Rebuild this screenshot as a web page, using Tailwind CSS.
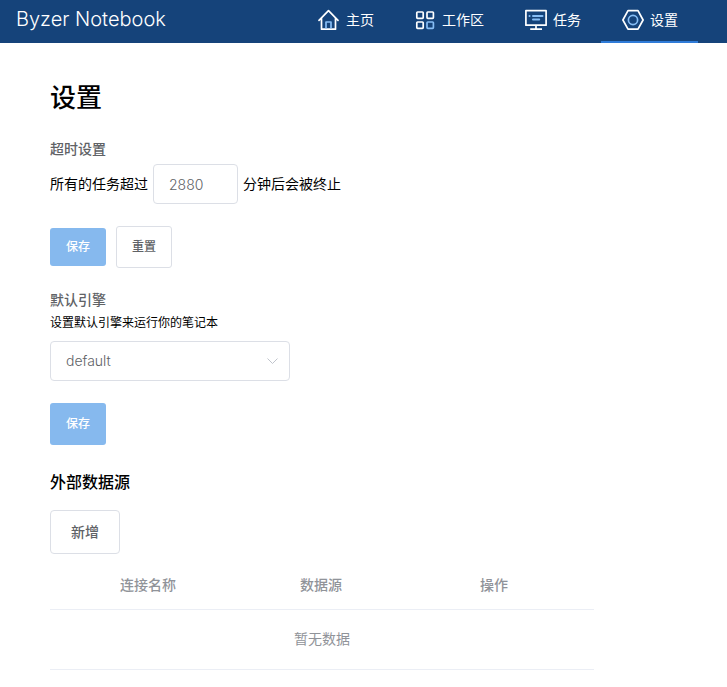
<!DOCTYPE html>
<html lang="zh-CN">
<head>
<meta charset="utf-8">
<meta name="viewport" content="width=device-width, initial-scale=1">
<title>设置 - Byzer Notebook</title>
<script src="https://cdn.jsdelivr.net/npm/@tailwindcss/browser@4"></script>
</head>
<body class="bg-white text-black text-sm font-['Inter','Noto_Sans_CJK_SC',sans-serif]">
<header class="flex items-stretch justify-between h-[43px] bg-[#15437a] pl-4 pr-[29px] text-white">
  <a href="#" class="text-xl leading-[38px] font-light">Byzer Notebook</a>
  <nav class="flex">
    <a href="#" class="flex items-center gap-1.5 pl-[21px] pr-5 pb-[3px]">
      <svg class="size-[22px]" viewBox="0 0 22 22" fill="none" stroke="#fff" stroke-width="1.7" stroke-linecap="round" stroke-linejoin="round"><path d="M1 11.3 10.5 1.6l9.5 9.7M3.5 9.2v11H17.5v-11"/><path stroke="#86bdf5" stroke-linecap="butt" d="M8 19.4v-6.4h5v6.4"/></svg>
      主页</a>
    <a href="#" class="flex items-center gap-1.5 pl-[21px] pr-5 pb-[3px]">
      <svg class="size-[21px]" viewBox="0 0 21 21" fill="none" stroke="#fff" stroke-width="1.7"><rect x="1.8" y="2" width="6.4" height="6.4" rx=".8"/><rect x="12" y="2" width="6.4" height="6.4" rx=".8"/><rect x="1.8" y="12" width="6.4" height="6.4" rx=".8"/><rect x="12" y="12" width="6.4" height="6.4" rx=".8" stroke="#86bdf5"/></svg>
      工作区</a>
    <a href="#" class="flex items-center gap-1.5 pl-[21px] pr-5 pb-[3px]">
      <svg class="size-[22px]" viewBox="0 0 22 22" fill="none" stroke="#fff" stroke-width="1.7" stroke-linejoin="round"><path d="M.9 1.6h20.2v14.6H.9zM11 16.2v4M5.2 20.2h11.8"/><path stroke="#86bdf5" stroke-width="2" stroke-linecap="round" d="M4.5 7h.1M8 7h9.5M8 10.4h6.2"/></svg>
      任务</a>
    <a href="#" aria-current="page" class="flex items-center gap-1.5 pl-[21px] pr-5 pb-px border-b-2 border-[#2f7bd8]">
      <svg class="size-[22px]" viewBox="0 0 22 22" fill="none" stroke="#fff" stroke-width="1.7" stroke-linejoin="round"><path d="M6 1.6h10L21.1 11 16 20.2H6L.9 11z"/><circle cx="11" cy="11" r="4.6" stroke="#86bdf5"/></svg>
      设置</a>
  </nav>
</header>
<main class="px-[50px] pt-9">
  <h1 class="text-[26px] leading-[38px] font-medium">设置</h1>
  <form>
    <h2 class="mt-[22px] leading-5 font-medium text-[#606266]">超时设置</h2>
    <div class="mt-[5px] flex items-center gap-[5px]">
      <label for="timeout">所有的任务超过</label>
      <input id="timeout" value="2880" class="w-[85px] h-10 rounded border border-[#dcdfe6] px-[15px] font-light text-[#606266]">
      <span>分钟后会被终止</span>
    </div>
    <div class="mt-[22px] flex items-center gap-2.5 text-xs font-medium">
      <button type="button" class="w-14 h-[38px] rounded-[3px] bg-[#86b9ee] text-white">保存</button>
      <button type="button" class="w-14 h-[42px] rounded-[3px] border border-[#dcdfe6] text-[#606266]">重置</button>
    </div>
  </form>
  <form>
    <h2 class="mt-[22px] leading-5 font-medium text-[#606266]">默认引擎</h2>
    <label for="engine" class="block mt-1 text-xs leading-[18px]">设置默认引擎来运行你的笔记本</label>
    <div class="relative mt-[9px] w-60">
      <select id="engine" class="block w-full h-10 appearance-none rounded border border-[#dcdfe6] px-[15px] font-light text-[#606266]"><option>default</option></select>
      <svg class="pointer-events-none absolute right-3 top-[15px] w-3 h-2.5" viewBox="0 0 12 10" fill="none" stroke="#c0c4cc"><path d="m1.5 2.5 5 5 5-5"/></svg>
    </div>
    <button type="button" class="mt-[22px] block w-14 h-[42px] rounded-[3px] bg-[#86b9ee] text-xs font-medium text-white">保存</button>
  </form>
  <section>
    <h2 class="mt-[25px] text-base leading-6 font-medium">外部数据源</h2>
    <button type="button" class="mt-4 block w-[70px] h-11 rounded border border-[#dcdfe6] font-medium text-[#606266]">新增</button>
    <table class="mt-[7px] w-full max-w-[544px] table-fixed border-collapse text-[#909399]">
      <colgroup><col class="w-[60px]"><col class="w-[180px]"><col class="w-[180px]"><col></colgroup>
      <thead>
        <tr class="h-12 border-b border-[#ebeef5] text-left"><td></td><th class="px-2.5 font-medium">连接名称</th><th class="px-2.5 font-medium">数据源</th><th class="px-2.5 font-medium">操作</th></tr>
      </thead>
      <tbody>
        <tr class="h-[60px] border-b border-[#ebeef5]"><td colspan="4" class="text-center">暂无数据</td></tr>
      </tbody>
    </table>
  </section>
</main>
</body>
</html>
